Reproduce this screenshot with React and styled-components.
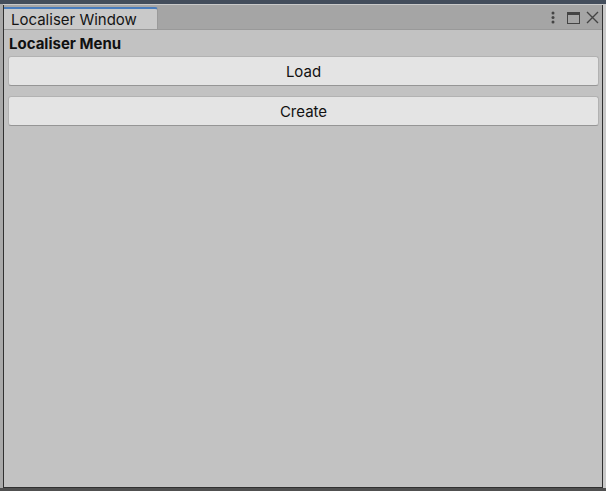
import React from "react";
import styled, { createGlobalStyle } from "styled-components";

const GlobalStyle = createGlobalStyle`
  html, body {
    margin: 0;
    padding: 0;
    width: 606px;
    height: 491px;
    overflow: hidden;
    font-family: Inter, "Noto Sans", sans-serif;
  }
`;

// Editor backdrop around the floating window
const Backdrop = styled.div`
  box-sizing: border-box;
  width: 606px;
  height: 491px;
  display: flex;
  flex-direction: column;
  padding: 5px 3px 0 3px;
  background: linear-gradient(to right, #a9a9a9 0 3px, #c9c9c9 3px);
  position: relative;
`;

const TopStrip = styled.div`
  position: absolute;
  left: 0;
  top: 0;
  width: 100%;
  height: 4px;
  background: #434d5b;
`;

const BottomStrip = styled.div`
  height: 3px;
  margin: 0 -3px;
  background: #505050;
`;

const Window = styled.div`
  flex: 1;
  display: flex;
  flex-direction: column;
  border-left: 1px solid #303030;
  border-right: 1px solid #303030;
  border-bottom: 1px solid #303030;
  background: #c2c2c2;
`;

const TabBar = styled.div`
  height: 24px;
  display: flex;
  align-items: flex-end;
  background: #a5a5a5;
  border-bottom: 1px solid #999;
`;

const Tab = styled.div`
  box-sizing: border-box;
  width: 154px;
  height: 22px;
  padding: 2px 0 0 7px;
  background: #c9c9c9;
  border-top: 2px solid #4a7dbd;
  border-top-right-radius: 3px;
  border-right: 1px solid #9a9a9a;
  color: #141414;
  font-size: 15px;
  line-height: 18px;
`;

const Actions = styled.div`
  margin-left: auto;
  align-self: center;
  display: flex;
  align-items: center;
  gap: 5px;
  padding: 1px 3px 0 0;
`;

const IconBtn = styled.span`
  display: flex;
  width: ${(p) => p.w || 14}px;
  height: 14px;
  margin-right: ${(p) => p.gap || 0}px;
  align-items: center;
  justify-content: center;
`;

const Content = styled.div`
  display: flex;
  flex-direction: column;
  padding: 4px 3px 0 4px;
  gap: 10px;
`;

const Heading = styled.div`
  font-weight: 700;
  font-size: 15px;
  line-height: 19px;
  color: #111;
  padding-left: 1px;
  margin-bottom: -7px;
`;

const Button = styled.button`
  box-sizing: border-box;
  height: 30px;
  width: 100%;
  background: #e4e4e4;
  border: 1px solid #b2b2b2;
  border-bottom-color: #959595;
  border-radius: 3px;
  font-family: inherit;
  font-size: 15px;
  color: #111;
  padding: 0;
`;

export default function App() {
  return (
    <>
      <GlobalStyle />
      <Backdrop>
        <TopStrip />
        <Window>
          <TabBar>
            <Tab>Localiser Window</Tab>
            <Actions>
              <IconBtn w={8} gap={4}>
                <svg width="4" height="13" viewBox="0 0 4 13">
                  <circle cx="2" cy="2" r="1.5" fill="#444" />
                  <circle cx="2" cy="6.5" r="1.5" fill="#444" />
                  <circle cx="2" cy="11" r="1.5" fill="#444" />
                </svg>
              </IconBtn>
              <IconBtn>
                <svg width="13" height="12" viewBox="0 0 13 12">
                  <rect x="0.5" y="0.5" width="12" height="11" fill="none" stroke="#444" />
                  <rect x="0.5" y="0.5" width="12" height="2.5" fill="#444" />
                </svg>
              </IconBtn>
              <IconBtn>
                <svg width="13" height="13" viewBox="0 0 13 13">
                  <path d="M1 1 L12 12 M12 1 L1 12" stroke="#444" strokeWidth="1.4" />
                </svg>
              </IconBtn>
            </Actions>
          </TabBar>
          <Content>
            <Heading>Localiser Menu</Heading>
            <Button>Load</Button>
            <Button>Create</Button>
          </Content>
        </Window>
        <BottomStrip />
      </Backdrop>
    </>
  );
}
